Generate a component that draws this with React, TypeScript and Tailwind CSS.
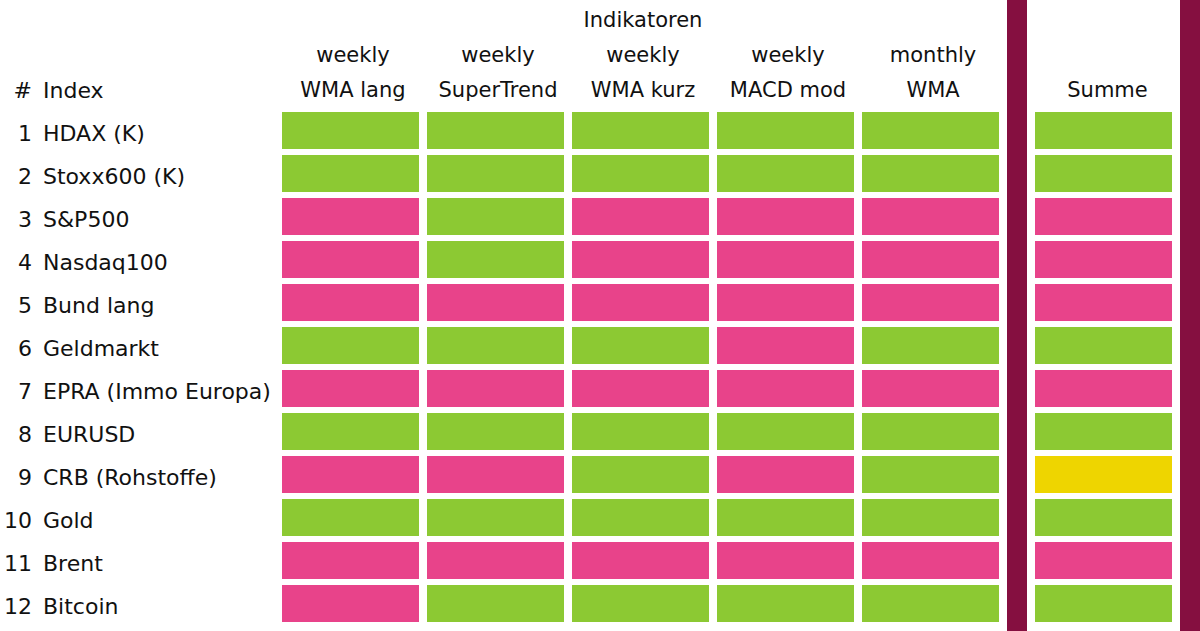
type C = 'g' | 'p' | 'y';

const cellColor: Record<C, string> = {
  g: 'bg-[#8cc933]',
  p: 'bg-[#e8438a]',
  y: 'bg-[#eed500]',
};

const rows: { name: string; cells: C[]; sum: C }[] = [
  { name: 'HDAX (K)', cells: ['g', 'g', 'g', 'g', 'g'], sum: 'g' },
  { name: 'Stoxx600 (K)', cells: ['g', 'g', 'g', 'g', 'g'], sum: 'g' },
  { name: 'S&P500', cells: ['p', 'g', 'p', 'p', 'p'], sum: 'p' },
  { name: 'Nasdaq100', cells: ['p', 'g', 'p', 'p', 'p'], sum: 'p' },
  { name: 'Bund lang', cells: ['p', 'p', 'p', 'p', 'p'], sum: 'p' },
  { name: 'Geldmarkt', cells: ['g', 'g', 'g', 'p', 'g'], sum: 'g' },
  { name: 'EPRA (Immo Europa)', cells: ['p', 'p', 'p', 'p', 'p'], sum: 'p' },
  { name: 'EURUSD', cells: ['g', 'g', 'g', 'g', 'g'], sum: 'g' },
  { name: 'CRB (Rohstoffe)', cells: ['p', 'p', 'g', 'p', 'g'], sum: 'y' },
  { name: 'Gold', cells: ['g', 'g', 'g', 'g', 'g'], sum: 'g' },
  { name: 'Brent', cells: ['p', 'p', 'p', 'p', 'p'], sum: 'p' },
  { name: 'Bitcoin', cells: ['p', 'g', 'g', 'g', 'g'], sum: 'g' },
];

const indicators = [
  ['weekly', 'WMA lang'],
  ['weekly', 'SuperTrend'],
  ['weekly', 'WMA kurz'],
  ['weekly', 'MACD mod'],
  ['monthly', 'WMA'],
];

export default function App() {
  return (
    <div className="flex h-[631px] w-[1200px] overflow-hidden bg-white font-['DejaVu_Sans',sans-serif] text-[#111]">
      {/* Indicator table */}
      <div className="w-[1007px] pr-2">
        <div className="grid h-[112px] grid-cols-[274px_repeat(5,137px)] grid-rows-[35px_35px_35px] gap-x-2 pt-[3px] text-[21px] leading-[35px]">
          <div className="col-start-4 pl-[5px] text-center">Indikatoren</div>
          <div className="col-start-1 row-start-2" />
          {indicators.map(([a], i) => (
            <div key={'a' + i} className="row-start-2 pl-[5px] text-center">
              {a}
            </div>
          ))}
          <div className="row-start-3 flex text-[22px]">
            <span className="w-8 text-right">#</span>
            <span className="ml-[11px]">Index</span>
          </div>
          {indicators.map(([, b], i) => (
            <div key={'b' + i} className="row-start-3 pl-[5px] text-center">
              {b}
            </div>
          ))}
        </div>

        <div className="grid grid-cols-[274px_repeat(5,137px)] auto-rows-[37px] gap-x-2 gap-y-[6px]">
          {rows.map((r, i) => (
            <div key={r.name} className="contents">
              <div className="flex text-[22px] leading-[44px] whitespace-nowrap">
                <span className="w-8 text-right">{i + 1}</span>
                <span className="ml-[11px]">{r.name}</span>
              </div>
              {r.cells.map((c, j) => (
                <div key={j} className={cellColor[c]} />
              ))}
            </div>
          ))}
        </div>
      </div>

      <div className="w-5 bg-[#850f40]" />

      {/* Summe */}
      <div className="w-[153px] px-2">
        <div className="h-[112px] pt-[3px] text-[21px] leading-[35px]">
          <div className="h-[70px]" />
          <div className="pl-2 text-center">Summe</div>
        </div>
        <div className="flex flex-col gap-[6px]">
          {rows.map((r) => (
            <div key={r.name} className={`h-[37px] ${cellColor[r.sum]}`} />
          ))}
        </div>
      </div>

      <div className="w-5 bg-[#850f40]" />
    </div>
  );
}
